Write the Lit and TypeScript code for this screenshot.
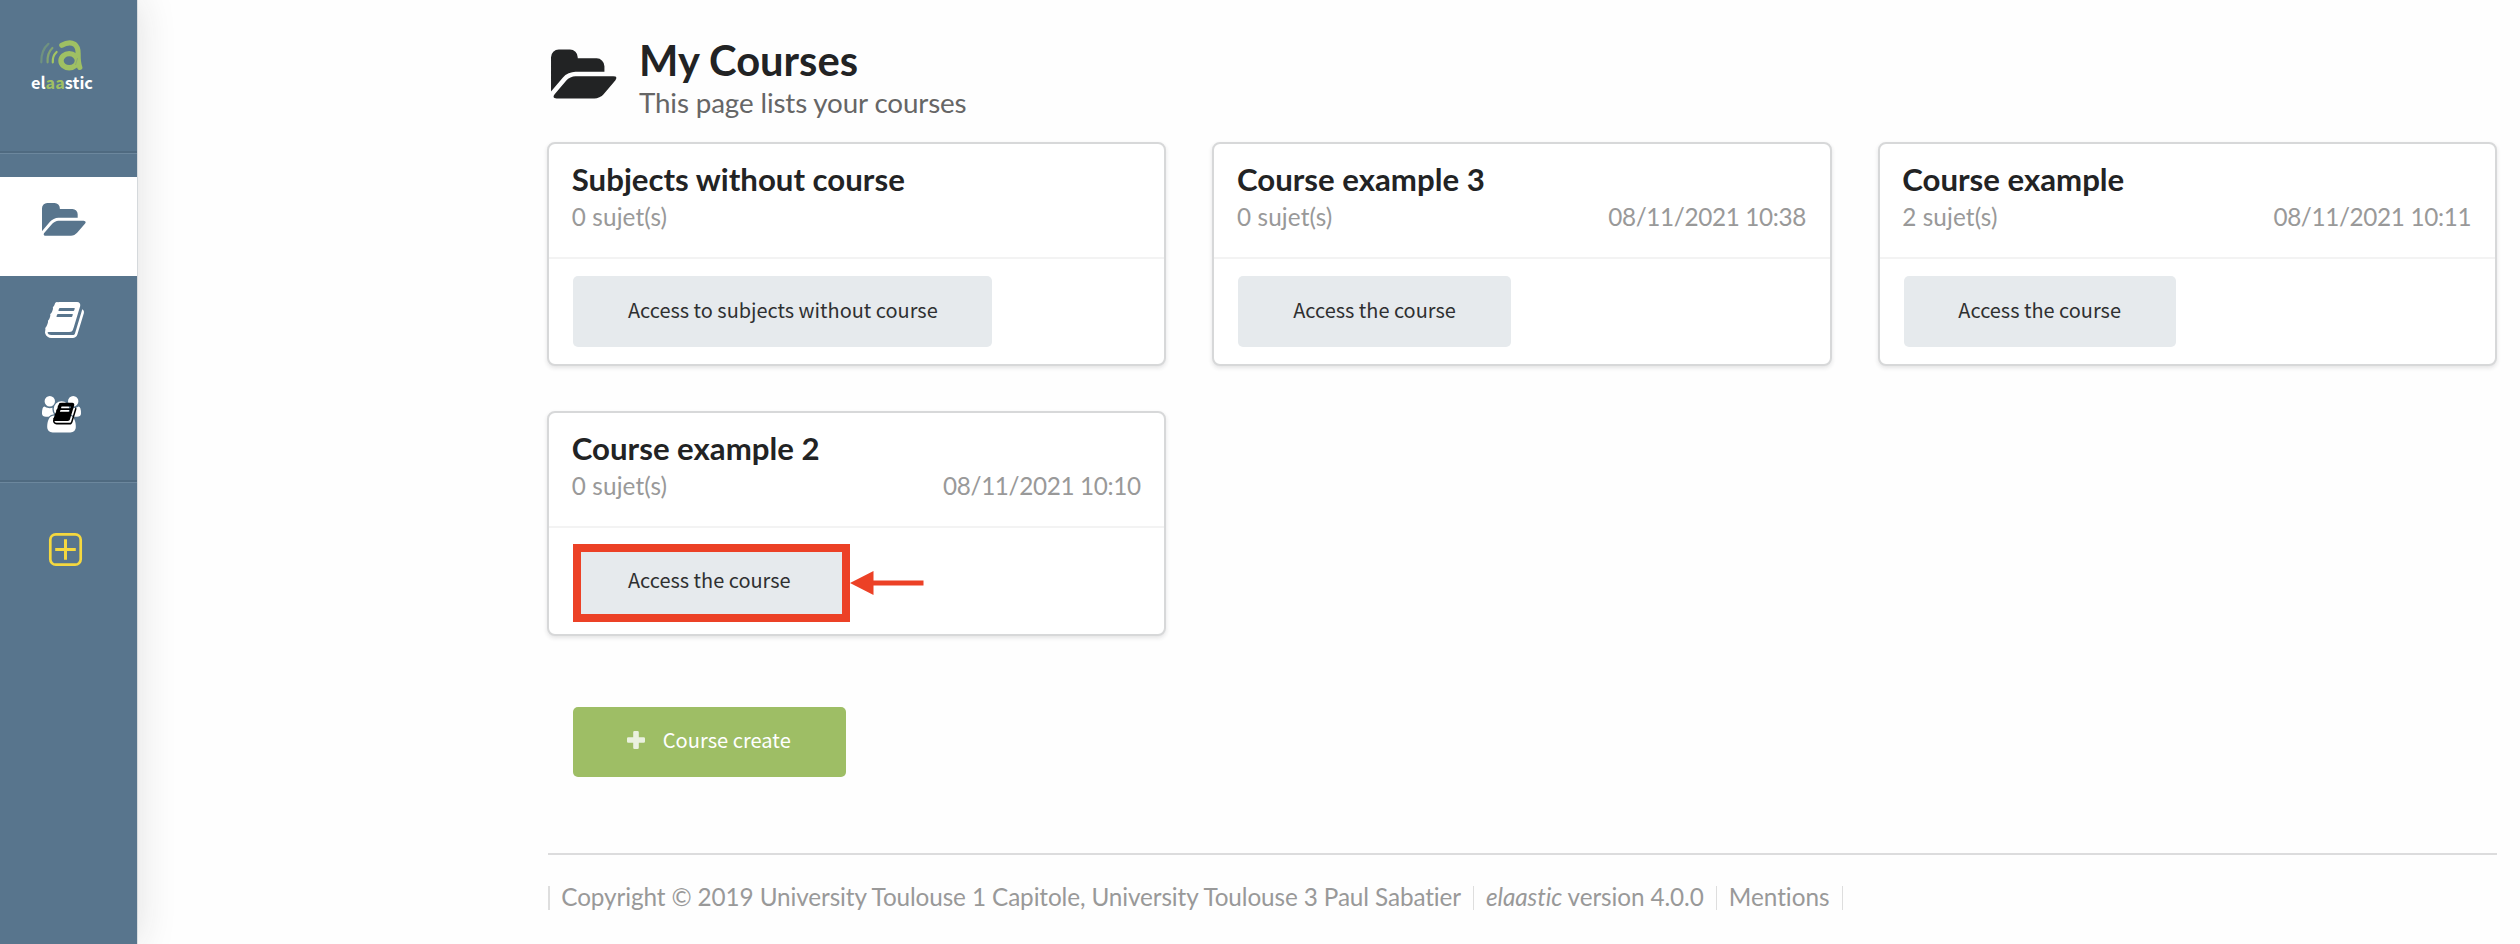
import { LitElement, html, css } from "lit";
import { customElement, property } from "lit/decorators.js";

const FOLDER =
  "M1879 952q0 31-31 66l-336 396q-43 51-120.500 86.500t-143.500 35.500h-1088q-34 0-60.500-13t-26.500-43q0-31 31-66l336-396q43-51 120.500-86.500t143.500-35.500h1088q34 0 60.500 13t26.500 43zm-343-344v160h-832q-94 0-197 47.500t-164 119.500l-337 396-5 6q0-4-.5-12.500t-.5-12.500v-960q0-92 66-158t158-66h320q92 0 158 66t66 158v32h544q92 0 158 66t66 158z";
const BOOK =
  "M1639 478q40 57 18 129l-275 906q-19 64-76.500 107.500t-122.500 43.500h-923q-77 0-148.500-53.500t-99.500-131.500q-24-67-2-127 0-4 3-27t4-37q1-8-3-21.500t-3-19.500q2-11 8-21t16.500-23.500 16.500-23.500q23-38 45-91.500t30-91.500q3-10 .5-30t-.5-28q3-11 17-28t17-23q21-36 42-92t25-90q1-9-2.500-32t.5-28q4-13 22-30.500t22-22.500q19-26 42.500-84.500t27.500-96.500q1-8-3-25.500t-2-26.500q2-8 9-18t18-23 17-21q8-12 16.500-30.500t15-35 16-36 19.500-32 26.500-23.500 36-11.500 47.500 5.500l-1 3q38-9 51-9h761q74 0 114 56t18 130l-274 906q-36 119-71.500 153.500t-128.500 34.500h-869q-27 0-38 15-11 16-1 43 24 70 144 70h923q29 0 56-15.500t35-41.500l300-987q7-22 5-57 38 15 59 43zm-1064 2q-4 13 2 22.500t20 9.500h608q13 0 25.500-9.500t16.500-22.500l21-64q4-13-2-22.500t-20-9.500h-608q-13 0-25.500 9.500t-16.500 22.500zm-83 256q-4 13 2 22.500t20 9.500h608q13 0 25.500-9.500t16.500-22.500l21-64q4-13-2-22.500t-20-9.500h-608q-13 0-25.500 9.500t-16.500 22.500z";
const USERS =
  "M593 896q-162 5-265 128h-134q-82 0-138-40.500t-56-118.500q0-353 124-353 6 0 43.500 21t97.500 42.500 119 21.500q67 0 133-23-5 37-5 66 0 139 81 256zm1071 637q0 120-73 189.500t-194 69.500h-874q-121 0-194-69.500t-73-189.500q0-53 3.500-103.500t14-109 26.500-108.500 43-97.500 62-81 85.500-53.500 111.500-20q10 0 43 21.500t73 48 107 48 135 21.500 135-21.500 107-48 73-48 43-21.500q61 0 111.500 20t85.500 53.500 62 81 43 97.500 26.500 108.500 14 109 3.500 103.500zm-1024-1277q0 106-75 181t-181 75-181-75-75-181 75-181 181-75 181 75 75 181zm704 384q0 159-112.500 271.500t-271.500 112.500-271.500-112.500-112.500-271.500 112.500-271.500 271.500-112.500 271.500 112.500 112.500 271.500zm576 225q0 78-56 118.500t-138 40.500h-134q-103-123-265-128 81-117 81-256 0-29-5-66 66 23 133 23 59 0 119-21.500t97.500-42.500 43.500-21q124 0 124 353zm-128-609q0 106-75 181t-181 75-181-75-75-181 75-181 181-75 181 75 75 181z";

interface Course {
  title: string;
  count: number;
  date?: string;
  action: string;
  highlighted?: boolean;
}

const COURSES: Course[] = [
  { title: "Subjects without course", count: 0, action: "Access to subjects without course" },
  { title: "Course example 3", count: 0, date: "08/11/2021 10:38", action: "Access the course" },
  { title: "Course example", count: 2, date: "08/11/2021 10:11", action: "Access the course" },
  { title: "Course example 2", count: 0, date: "08/11/2021 10:10", action: "Access the course", highlighted: true },
];

@customElement("side-bar")
export class SideBar extends LitElement {
  static styles = css`
    :host {
      display: flex;
      flex-direction: column;
      box-sizing: border-box;
      width: 137px;
      height: 944px;
      background: #58758d;
      box-shadow: 0 0 38px rgba(34, 36, 38, 0.14), 1px 0 0 #e3e7ea;
    }
    .brand {
      height: 151px;
      padding: 38.5px 0 0 31px;
      box-sizing: border-box;
    }
    .mark {
      display: block;
      width: 54px;
      height: 34px;
      margin-left: 7px;
    }
    .word {
      font: 700 16.3px/20px "Noto Sans CJK SC", sans-serif;
      font-feature-settings: "liga" 0;
      color: #fff;
      margin-top: -1px;
    }
    .green {
      color: #9fc063;
    }
    .rule {
      height: 2px;
      background: #4f6a80;
      border-bottom: 1px solid #6c879d;
    }
    .item {
      display: flex;
      box-sizing: border-box;
      align-items: flex-start;
      color: #fff;
    }
    svg {
      display: block;
      fill: currentColor;
      overflow: visible;
    }
    .active {
      margin-top: 23.4px;
      height: 98.6px;
      padding: 23px 0 0 42.3px;
      background: #fff;
      color: #58758d;
    }
    .folder {
      width: 44.6px;
      height: 41.7px;
    }
    .books {
      height: 98px;
      padding: 23px 0 0 44.5px;
    }
    .book {
      width: 42px;
      height: 42px;
    }
    .groups {
      height: 106.5px;
      padding: 22.5px 0 0 42.3px;
    }
    .users {
      width: 39px;
      height: 36.5px;
    }
    .stack {
      position: relative;
    }
    .overlay {
      position: absolute;
      left: 10.6px;
      top: 4.8px;
      width: 25.3px;
      height: 25.3px;
      color: #000;
    }
    .add {
      padding: 50px 0 0 48.5px;
    }
    .plus {
      width: 33px;
      height: 33px;
      fill: none;
      stroke: #f5d83f;
    }
  `;

  render() {
    return html`
      <div class="brand">
        <svg class="mark" viewBox="0 0 54 34">
          <g fill="none" stroke-linecap="round" stroke-width="2.200">
            <path d="M3.300 23.300Q3 11 10.400 4.800" stroke="#6f9280" />
            <path d="M9.600 23.300Q9 14 14.400 9" stroke="#84a471" />
            <path d="M14.800 23.300Q14.300 17 18.600 13" stroke="#a3c562" />
          </g>
          <g fill="none" stroke="#9fc063" stroke-linecap="round">
            <path d="M23.800 6.300Q31 2.300 36.600 5.200Q40.300 8 40.100 14.500Q40 24 41.800 28.400" stroke-width="5.200" />
            <ellipse cx="31.200" cy="21.700" rx="8.200" ry="7.100" stroke-width="5.400" />
          </g>
          <path d="M37.500 26L39.600 19" stroke="#8cab72" stroke-width="1" fill="none" />
        </svg>
        <div class="word">el<span class="green">aa</span>stic</div>
      </div>
      <div class="rule"></div>
      <div class="item active">
        <svg class="folder" viewBox="0 0 1920 1792"><path d=${FOLDER} /></svg>
      </div>
      <div class="item books">
        <svg class="book" viewBox="0 0 1792 1792"><path d=${BOOK} /></svg>
      </div>
      <div class="item groups">
        <div class="stack">
          <svg class="users" viewBox="0 0 1920 1792"><path d=${USERS} /></svg>
          <svg class="overlay" viewBox="0 0 1792 1792"><path d=${BOOK} /></svg>
        </div>
      </div>
      <div class="rule"></div>
      <div class="item add">
        <svg class="plus" viewBox="0 0 33 33">
          <rect x="1.300" y="1.300" width="30.400" height="30.400" rx="5.500" stroke-width="2.700" />
          <path d="M16.500 6.200V26.800M6.200 16.500H26.800" stroke-width="3" />
        </svg>
      </div>
    `;
  }
}

@customElement("course-card")
export class CourseCard extends LitElement {
  @property({ attribute: false }) course!: Course;

  static styles = css`
    :host {
      display: block;
      box-sizing: border-box;
      border: 2px solid #d7d8d9;
      border-radius: 8px;
      background: #fff;
      box-shadow: 0 2px 4px rgba(34, 36, 38, 0.12);
    }
    .content {
      box-sizing: border-box;
      height: 113px;
      padding: 16px 23.6px 0 22.6px;
    }
    .title {
      font-size: 31.2px;
      line-height: 38px;
      font-weight: 700;
      color: #222324;
    }
    .meta {
      display: flex;
      justify-content: space-between;
      margin-top: 4px;
      line-height: 30px;
      color: #999;
    }
    .count {
      letter-spacing: 0.12px;
    }
    .date {
      letter-spacing: -0.35px;
    }
    .actions {
      display: flex;
      align-items: center;
      border-top: 2px solid #f3f3f3;
      padding: 17px 24px 16.5px;
    }
    .tall {
      padding-top: 19px;
    }
    .button {
      position: relative;
      box-sizing: border-box;
      height: 71px;
      padding: 18.5px 54.800px 0;
      border: 0;
      border-radius: 5px;
      background: #e6eaed;
      color: #2f3031;
      font: 400 19.93px/30px "Noto Sans CJK SC", sans-serif;
      white-space: nowrap;
    }
    .frame {
      position: absolute;
      left: 0;
      top: -3px;
      box-sizing: border-box;
      width: 277px;
      height: 78px;
      border: 8px solid #ec4126;
    }
    .arrow {
      position: absolute;
      left: 277px;
      top: 24px;
      width: 74px;
      height: 24px;
      fill: #ec4126;
    }
  `;

  render() {
    const c = this.course;
    return html`
      <div class="content">
        <div class="title">${c.title}</div>
        <div class="meta">
          <span class="count">${c.count} sujet(s)</span>
          <span class="date">${c.date ?? ""}</span>
        </div>
      </div>
      <div class="actions ${c.highlighted ? "tall" : ""}">
        <div class="button">
          ${c.action}
          ${c.highlighted
            ? html`<div class="frame"></div>
                <svg class="arrow" viewBox="0 0 74 24">
                  <path d="M0 12L23.500 0V9.500H73.500V14.500H23.500V24Z" />
                </svg>`
            : ""}
        </div>
      </div>
    `;
  }
}

@customElement("app-root")
export class AppRoot extends LitElement {
  static styles = css`
    :host {
      display: flex;
      width: 2520px;
      height: 944px;
      overflow: hidden;
      background: #fefefe;
      font-family: Lato, sans-serif;
      font-size: 24.3px;
      font-variant-ligatures: none;
    }
    side-bar {
      flex: none;
    }
    .main {
      display: flex;
      flex-direction: column;
      box-sizing: border-box;
      width: 2383px;
      padding: 35px 23.500px 0 410.200px;
    }
    .header {
      display: flex;
      height: 107px;
      padding-left: 4.1px;
      box-sizing: border-box;
    }
    .icon {
      width: 66.8px;
      height: 62.3px;
      margin: 10px 20.900px 0 0;
      fill: #222324;
    }
    .heading {
      font-size: 41.7px;
      line-height: 50px;
      font-weight: 700;
      color: #222324;
    }
    .sub {
      margin-top: 1px;
      font-size: 27.77px;
      line-height: 34px;
      letter-spacing: -0.13px;
      color: #666;
    }
    .cards {
      display: grid;
      grid-template-columns: repeat(3, 619.2px);
      column-gap: 46px;
      row-gap: 45px;
      align-items: start;
    }
    .create {
      display: flex;
      align-self: flex-start;
      box-sizing: border-box;
      width: 273px;
      height: 70px;
      margin: 70.5px 0 0 25.8px;
      padding: 18.500px 0 0 54px;
      border-radius: 5px;
      background: #9ebe65;
      color: #fff;
      font: 400 20.100px/30px "Noto Sans CJK SC", sans-serif;
    }
    .cross {
      width: 18px;
      height: 18px;
      margin: 5.5px 17.800px 0 0;
      fill: #eaf1df;
    }
    .footer {
      display: flex;
      margin: 76px 0 0 1px;
      padding-top: 27px;
      border-top: 2px solid #dcdcdd;
      color: #999;
      line-height: 30px;
      letter-spacing: -0.11px;
    }
    .link {
      white-space: pre;
    }
    .bar {
      width: 1.500px;
      height: 24px;
      margin: 4px 11.600px 0 12px;
      background: #dedede;
    }
    .first {
      margin-left: 0;
    }
    .mentions {
      letter-spacing: 0;
    }
  `;

  render() {
    return html`
      <side-bar></side-bar>
      <div class="main">
        <div class="header">
          <svg class="icon" viewBox="0 0 1920 1792"><path d=${FOLDER} /></svg>
          <div>
            <div class="heading">My Courses</div>
            <div class="sub">This page lists your courses</div>
          </div>
        </div>
        <div class="cards">${COURSES.map((c) => html`<course-card .course=${c}></course-card>`)}</div>
        <div class="create">
          <svg class="cross" viewBox="0 0 18 18">
            <path
              d="M7.500 0H10.500Q11.800 0 11.800 1.300V6.200H16.700Q18 6.200 18 7.500V10.500Q18 11.800 16.700 11.800H11.800V16.700Q11.800 18 10.500 18H7.500Q6.200 18 6.200 16.700V11.800H1.300Q0 11.800 0 10.500V7.500Q0 6.200 1.300 6.200H6.200V1.300Q6.200 0 7.500 0Z"
            />
          </svg>
          <span>Course create</span>
        </div>
        <div class="footer">
          <span class="bar first"></span>
          <span class="link">Copyright © 2019 University Toulouse 1 Capitole, University Toulouse 3 Paul Sabatier</span>
          <span class="bar"></span>
          <span class="link"><i>elaastic</i> version 4.0.0</span>
          <span class="bar"></span>
          <span class="link mentions">Mentions</span>
          <span class="bar"></span>
        </div>
      </div>
    `;
  }
}
